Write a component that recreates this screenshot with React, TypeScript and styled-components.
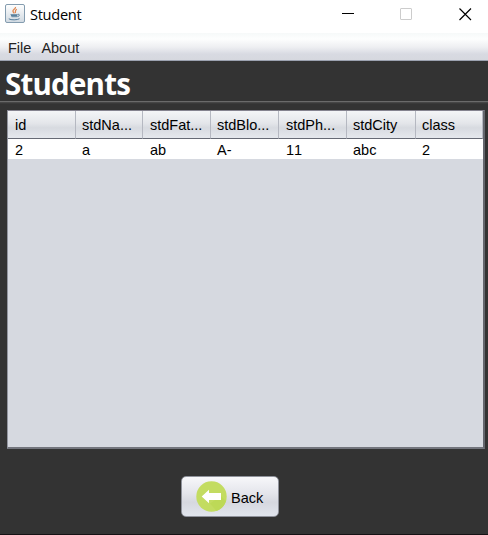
import React from "react";
import styled, { createGlobalStyle } from "styled-components";

const Global = createGlobalStyle`
  * { box-sizing: border-box; }
  html, body { margin: 0; padding: 0; overflow: hidden; }
  body { font-family: "Liberation Sans", Arial, sans-serif; color: #000; }
`;

const Window = styled.div`
  width: 488px;
  height: 535px;
  display: flex;
  flex-direction: column;
  background: #333;
  border-bottom: 1px solid #151214;
`;

const TitleBar = styled.header`
  height: 33px;
  flex: none;
  display: flex;
  align-items: flex-start;
  padding: 4px 16px 0 5px;
  background: #fff;
`;

const WindowTitle = styled.span`
  flex: 1;
  margin-left: 5px;
  font: 14.6px/20px "Open Sans", "Noto Sans", sans-serif;
  letter-spacing: -0.3px;
  color: #000;
`;

const Controls = styled.div`
  display: flex;
  gap: 46px;
  padding-top: 4px;
  svg { display: block; }
  svg:last-child { margin-left: 1px; }
`;

const MenuBar = styled.nav`
  height: 28px;
  flex: none;
  display: flex;
  gap: 10px;
  padding: 0 8px;
  background: linear-gradient(#f6f9f9 0%, #fdfefe 22%, #eeeff2 52%, #d8dae2 78%, #d6d8df 100%);
  border-bottom: 1px solid #9ca2b0;
`;

const MenuItem = styled.span`
  font-size: 14.5px;
  line-height: 30px;
  color: #222;
`;

const Heading = styled.h1`
  height: 40px;
  flex: none;
  margin: 0;
  padding-left: 5px;
  font: 700 29.5px/45px "Open Sans", "Noto Sans", sans-serif;
  letter-spacing: -0.8px;
  color: #fff;
  white-space: nowrap;
`;

const Divider = styled.div`
  height: 3px;
  flex: none;
  background: linear-gradient(#6a6a6a 0 1px, #464646 1px 2px, #393939 2px);
`;

const TablePane = styled.section`
  width: 478px;
  height: 339px;
  flex: none;
  margin: 6px 0 0 7px;
  background: #d6d9e0;
  border: solid;
  border-width: 1px 2px 2px 1px;
  border-color: #85838f #64666d #73757d #92959f;
`;

const Grid = styled.div`
  display: grid;
  grid-template-columns: 68px 67px 68px 68px 68px 69px 67px;
`;

const HeaderCell = styled.div<{ $inset: number }>`
  height: 28px;
  padding-left: ${({ $inset }) => $inset}px;
  font-size: 14.5px;
  line-height: 29px;
  white-space: nowrap;
  background: linear-gradient(#f4f5f7 0%, #e4e6ea 45%, #d7dae0 62%, #e5e8ed 100%);
  border-right: 1px solid #b5b8c1;
  border-bottom: 1px solid #666a75;
`;

const Cell = styled.div<{ $inset: number }>`
  height: 20px;
  padding-left: ${({ $inset }) => $inset}px;
  font-size: 14.5px;
  line-height: 22px;
  font-kerning: none;
  background: #fff;
`;

const Footer = styled.footer`
  display: flex;
  justify-content: center;
  padding: 27px 28px 0 0;
`;

const BackButton = styled.button`
  width: 98px;
  height: 41px;
  display: flex;
  align-items: center;
  gap: 4px;
  padding: 0 0 0 14px;
  font: 14.5px/20px "Liberation Sans", Arial, sans-serif;
  color: #000;
  background: linear-gradient(#f7f7fa 0%, #e5e6ec 40%, #d6d8df 65%, #e1e5ed 100%);
  border: 1px solid #8f929b;
  border-radius: 5px;
  span { padding-top: 3px; }
`;

const JavaIcon = () => (
  <svg width="20" height="20" viewBox="0 0 20 20" fill="none">
    <defs>
      <linearGradient id="tile" x2="0" y2="1">
        <stop stopColor="#fff" />
        <stop offset="1" stopColor="#d0d9e1" />
      </linearGradient>
    </defs>
    <rect x=".5" y=".5" width="19" height="18" rx="1.5" fill="url(#tile)" stroke="#849caf" />
    <path d="M10.5 3c.5 2-3.3 2.7-2.5 4.5.3.8 1.3 1 .8 2M11.8 5.3c-2.3 1.4-1 2.2-1.5 3.7" stroke="#df8852" strokeWidth="1.3" />
    <path d="M5.3 10h7.4l-.8 3.2H6.7z" fill="#7898ae" />
    <path d="M6 11.6h6M12.7 10.4c2.5-.6 2 2-.3 2.2M3.8 14.8c2 1.5 8.7 1.3 10.7-.1" stroke="#557e9d" strokeWidth="1" />
  </svg>
);

const ArrowIcon = () => (
  <svg width="31" height="31" viewBox="0 0 31 31">
    <circle cx="15.5" cy="15.5" r="15.2" fill="#c3dc61" />
    <path d="M14 22.5 20.5 30a15.2 15.2 0 0 0 9.5-10l-5-5z" fill="#bdd957" />
    <path d="M5.7 15.5 13 8.8v3.1h12v7.2H13v3.1z" fill="#fff" />
  </svg>
);

const columns = [
  { name: "id", value: "2", inset: 7 },
  { name: "stdNa...", value: "a", inset: 6 },
  { name: "stdFat...", value: "ab", inset: 7 },
  { name: "stdBlo...", value: "A-", inset: 6 },
  { name: "stdPh...", value: "11", inset: 7 },
  { name: "stdCity", value: "abc", inset: 6 },
  { name: "class", value: "2", inset: 6 },
];

export default function App() {
  return (
    <>
      <Global />
      <Window>
        <TitleBar>
          <JavaIcon />
          <WindowTitle>Student</WindowTitle>
          <Controls>
            <svg width="12" height="12"><path d="M0 5.5h12" stroke="#000" /></svg>
            <svg width="12" height="12"><rect x=".5" y=".5" width="11" height="11" rx=".5" fill="none" stroke="#ccc" /></svg>
            <svg width="13" height="13"><path d="m.5.5 11.5 11.5M12 .5.5 12" stroke="#000" strokeWidth="1.15" /></svg>
          </Controls>
        </TitleBar>
        <MenuBar>
          <MenuItem>File</MenuItem>
          <MenuItem>About</MenuItem>
        </MenuBar>
        <Heading>Students</Heading>
        <Divider />
        <TablePane>
          <Grid>
            {columns.map((c) => <HeaderCell key={c.name} $inset={c.inset}>{c.name}</HeaderCell>)}
            {columns.map((c) => <Cell key={c.name + "-value"} $inset={c.inset}>{c.value}</Cell>)}
          </Grid>
        </TablePane>
        <Footer>
          <BackButton><ArrowIcon /><span>Back</span></BackButton>
        </Footer>
      </Window>
    </>
  );
}
